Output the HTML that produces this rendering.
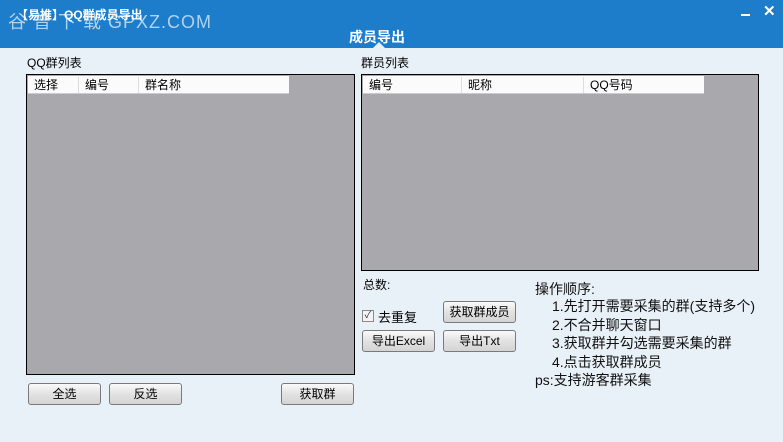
<!DOCTYPE html>
<html><head><meta charset="utf-8"><style>
*{margin:0;padding:0;box-sizing:border-box}
body{width:783px;height:442px;background:#e9f1f8;position:relative;overflow:hidden;font-family:"Liberation Sans","Noto Sans CJK SC",sans-serif;font-size:12px;color:#000}
.hd{position:absolute;left:0;top:0;width:783px;height:48px;background:#1d7dcb}
.a{position:absolute;white-space:nowrap}
.grid{position:absolute;background:#a9a8ad;border:1px solid #000}
.gh{position:absolute;left:1px;top:1px;height:18px;background:#fbfbfb;border-bottom:1px solid #ccc}
.gh span{position:absolute;top:1px;height:16px;border-left:1px solid #ddd;padding-left:6px;line-height:16px;font-size:12px}
.btn{position:absolute;height:22px;border:1px solid #7a7a7a;border-radius:3px;background:linear-gradient(#fafafa,#e2e2e2 50%,#d4d4d4);text-align:center;line-height:20px;font-size:12px}
.t{font-size:14px;color:#111}
</style></head><body>
<div class="hd"></div>
<div class="a" style="left:8px;top:8px;color:#aed3f0;font-size:18px;letter-spacing:1px">谷 普 下 载 GPXZ.COM</div>
<div class="a" style="left:16px;top:6px;color:#fff;font-size:12px;font-weight:bold">【易推】QQ群成员导出</div>
<div class="a" style="left:349px;top:27px;color:#fff;font-size:14px;font-weight:bold">成员导出</div>
<div class="a" style="left:373px;top:42px;width:0;height:0;border-left:6px solid transparent;border-right:6px solid transparent;border-bottom:6px solid #e9f1f8"></div>
<div class="a" style="left:741px;top:14px;width:9px;height:2px;background:#fff"></div>
<div class="a" style="left:763px;top:2px;color:#fff;font-size:15px;font-weight:bold">✕</div>

<div class="a" style="left:27px;top:54px">QQ群列表</div>
<div class="grid" style="left:26px;top:74px;width:329px;height:301px">
 <div class="gh" style="width:261px"><span style="left:0;border:none">选择</span><span style="left:50px">编号</span><span style="left:110px">群名称</span></div>
</div>
<div class="a" style="left:361px;top:54px">群员列表</div>
<div class="grid" style="left:361px;top:74px;width:398px;height:197px">
 <div class="gh" style="width:341px"><span style="left:0;border:none">编号</span><span style="left:98px">昵称</span><span style="left:220px">QQ号码</span></div>
</div>

<div class="btn" style="left:28px;top:383px;width:73px">全选</div>
<div class="btn" style="left:109px;top:383px;width:73px">反选</div>
<div class="btn" style="left:281px;top:383px;width:73px">获取群</div>

<div class="a" style="left:363px;top:276px">总数:</div>
<div class="a" style="left:362px;top:310px;width:12px;height:12px;border:1px solid #8a8a8a;background:#f4f4f4;color:#334;font-size:10px;line-height:10px;text-align:center">✓</div>
<div class="a" style="left:378px;top:307px;font-size:13px">去重复</div>
<div class="btn" style="left:443px;top:301px;width:73px">获取群成员</div>
<div class="btn" style="left:362px;top:330px;width:73px">导出Excel</div>
<div class="btn" style="left:443px;top:330px;width:73px">导出Txt</div>

<div class="a t" style="left:535px;top:279px">操作顺序:</div>
<div class="a t" style="left:552px;top:296px">1.先打开需要采集的群(支持多个)</div>
<div class="a t" style="left:552px;top:315px">2.不合并聊天窗口</div>
<div class="a t" style="left:552px;top:333px">3.获取群并勾选需要采集的群</div>
<div class="a t" style="left:552px;top:352px">4.点击获取群成员</div>
<div class="a t" style="left:535px;top:370px">ps:支持游客群采集</div>
</body></html>
